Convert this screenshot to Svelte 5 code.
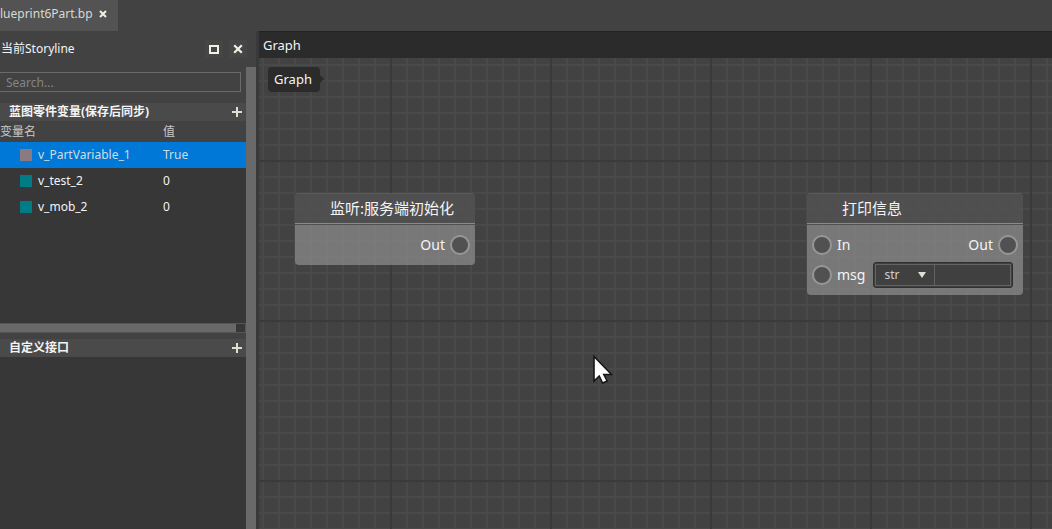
<script>
  const variables = [
    { name: 'v_PartVariable_1', value: 'True', tone: 'mauve', selected: true },
    { name: 'v_test_2', value: '0', tone: 'teal', selected: false },
    { name: 'v_mob_2', value: '0', tone: 'teal', selected: false }
  ];
  let search = $state('');
  let message = $state('');
  let kind = $state('str');
</script>

{#snippet plus()}
  <svg width="10" height="10" viewBox="0 0 10 10" shape-rendering="crispEdges" aria-hidden="true"><path d="M4 0h2v4h4v2H6v4H4V6H0V4h4z" fill="#deded2" /></svg>
{/snippet}

{#snippet cross()}
  <svg width="10" height="10" viewBox="0 0 10 10" aria-hidden="true"><path d="M1.2 1.2l7.6 7.6M8.8 1.2L1.2 8.8" stroke="#f0f0e4" stroke-width="2.2" /></svg>
{/snippet}

<div class="app">
  <header class="tabs">
    <div class="tab">
      <span>lueprint6Part.bp</span>
      <button class="tab-close" aria-label="Close tab"><svg width="8" height="8" viewBox="0 0 8 8" aria-hidden="true"><path d="M1 1l6 6M7 1L1 7" stroke="#f0f0e4" stroke-width="2" /></svg></button>
    </div>
  </header>

  <div class="work">
    <aside>
      <div class="panel-title">
        <span class="grow">当前Storyline</span>
        <button class="tool" aria-label="Float panel"><svg width="10" height="9" viewBox="0 0 10 9" shape-rendering="crispEdges" aria-hidden="true"><path d="M0 0h10v9H0zM2 2v5h6V2z" fill="#f0f0e4" fill-rule="evenodd" /></svg></button>
        <button class="tool" aria-label="Close panel">{@render cross()}</button>
      </div>
      <div class="panel-body">
        <div class="panel-content">
          <div class="search"><input type="text" placeholder="Search..." aria-label="Search" bind:value={search} /></div>
          <section class="variables">
            <h2><span class="grow">蓝图零件变量(保存后同步)</span><button aria-label="Add variable">{@render plus()}</button></h2>
            <div class="list">
              <table>
                <thead><tr><th>变量名</th><th class="value">值</th></tr></thead>
                <tbody>
                  {#each variables as v}
                    <tr class:selected={v.selected}>
                      <td><div class="name"><i class={v.tone}></i>{v.name}</div></td>
                      <td>{v.value}</td>
                    </tr>
                  {/each}
                </tbody>
              </table>
            </div>
            <div class="hscroll"><div class="thumb"></div></div>
          </section>
          <section class="interfaces">
            <h2><span class="grow">自定义接口</span><button aria-label="Add interface">{@render plus()}</button></h2>
            <div class="list"></div>
          </section>
        </div>
        <div class="vscroll"></div>
      </div>
    </aside>

    <main>
      <div class="graph-title">Graph</div>
      <div class="canvas">
        <button class="crumb">Graph</button>

        <article class="node event">
          <h3>监听:服务端初始化</h3>
          <div class="ports">
            <div class="row"><span class="grow"></span><span>Out</span><i class="pin"></i></div>
          </div>
        </article>

        <article class="node print">
          <h3>打印信息</h3>
          <div class="ports">
            <div class="row"><i class="pin"></i><span class="grow">In</span><span>Out</span><i class="pin"></i></div>
            <div class="row">
              <i class="pin"></i><label for="msg">msg</label>
              <div class="field">
                <div class="pick">
                  <select aria-label="Type" bind:value={kind}><option>str</option></select>
                  <svg width="8" height="6" viewBox="0 0 8 6" aria-hidden="true"><path d="M0 0h8L4 6z" fill="#deded2" /></svg>
                </div>
                <input id="msg" type="text" bind:value={message} />
              </div>
            </div>
          </div>
        </article>

        <svg class="cursor" width="20" height="29" viewBox="0 0 20 29" aria-hidden="true"><path d="M1 1.5V26l5.2-5 3.4 7 4.6-2-3.4-6.5H18.5z" fill="#fff" stroke="#171717" stroke-width="1.6" /></svg>
      </div>
    </main>
  </div>
</div>

<style>
  :global(body) { margin: 0; background: #424242; }
  .app {
    min-height: 100vh;
    display: flex;
    flex-direction: column;
    overflow: hidden;
    background: #424242;
    color: #f4f4f4;
    font: 12px/18px "Noto Sans", "Noto Sans CJK SC", sans-serif;
  }
  * { box-sizing: border-box; }
  button, input, select {
    margin: 0;
    padding: 0;
    border: 0;
    background: none;
    color: inherit;
    font: inherit;
    outline: none;
    border-radius: 0;
  }
  button { display: grid; place-items: center; }
  svg { display: block; }
  .grow { flex: 1; }

  .tabs { height: 31px; display: flex; }
  .tab {
    display: flex;
    align-items: center;
    gap: 6px;
    padding: 0 11px 4px 0;
    background: #535353;
    color: #d8d8d8;
    white-space: nowrap;
  }
  .work { flex: 1; display: flex; }

  aside {
    width: 259px;
    flex: none;
    display: flex;
    flex-direction: column;
    border-right: 3px solid #393939;
  }
  .panel-title {
    height: 36px;
    display: flex;
    align-items: center;
    gap: 6px;
    padding: 0 9px 0 1px;
  }
  .tool { width: 18px; height: 18px; background: #464646; }
  .panel-body { flex: 1; display: flex; }
  .panel-content { flex: 1; min-width: 0; display: flex; flex-direction: column; }
  .vscroll { width: 10px; background: #696969; }
  .search { padding: 5px 5px 11px 0; }
  .search input {
    display: block;
    width: 100%;
    height: 20px;
    padding-left: 6px;
    border: 1px solid #6b6b6b;
    border-left: 0;
  }
  .search input::placeholder { color: #858585; opacity: 1; }
  h2 {
    display: flex;
    align-items: center;
    height: 18px;
    margin: 0;
    padding: 0 4px 0 9px;
    background: #4a4a4a;
    font-size: 12px;
    line-height: 20px;
    font-weight: 700;
  }
  .variables { display: flex; flex-direction: column; margin-bottom: 6px; }
  .list { background: #373737; }
  .variables .list { height: 202px; }
  .interfaces { flex: 1; display: flex; flex-direction: column; }
  .interfaces .list { flex: 1; }
  table { width: 100%; border-collapse: collapse; table-layout: fixed; }
  th {
    height: 21px;
    padding: 0;
    background: #424242;
    color: #c8c8c8;
    font-weight: 400;
    text-align: left;
  }
  th.value { width: 83px; }
  td { height: 26px; padding: 0; }
  .selected { background: #0078d7; color: #d0dce0; }
  .name { display: flex; align-items: center; gap: 6px; padding-left: 20px; }
  .name i { width: 12px; height: 12px; }
  .mauve { background: #8b7b80; }
  .teal { background: #007c89; }
  .hscroll {
    height: 10px;
    padding-right: 9px;
    border: 1px solid #555;
    border-left: 0;
    background: #373737;
  }
  .thumb { height: 100%; background: #696969; }

  main { flex: 1; min-width: 0; display: flex; flex-direction: column; font-size: 13px; }
  .graph-title {
    height: 27px;
    padding: 4px;
    border-top: 1px solid #222;
    background: #2b2b2b;
  }
  .canvas {
    flex: 1;
    position: relative;
    overflow: hidden;
    background-color: #424242;
    background-image:
      linear-gradient(90deg, #3a3a3a 2px, transparent 2px),
      linear-gradient(#3a3a3a 2px, transparent 2px),
      linear-gradient(90deg, #494949 2px, transparent 2px),
      linear-gradient(#494949 2px, transparent 2px);
    background-size: 160px 160px, 160px 160px, 16px 16px, 16px 16px;
    background-position: 131px 0, 0 102px, 3px 0, 0 6px;
  }
  .crumb {
    position: absolute;
    left: 9px;
    top: 9px;
    width: 52px;
    height: 25px;
    padding: 0 2px 1px 0;
    border-radius: 4px;
    background: #2b2b2b;
  }
  .crumb::after {
    content: "";
    position: absolute;
    left: 52px;
    top: 8px;
    border: 4px solid transparent;
    border-left-color: #2b2b2b;
    border-right: 0;
  }
  .node {
    position: absolute;
    top: 135px;
    border-radius: 4px;
    overflow: hidden;
    font-size: 14px;
  }
  .event { left: 36px; width: 180px; }
  .print { left: 548px; width: 216px; }
  h3 {
    height: 31px;
    margin: 0;
    padding: 4px 0 0 35px;
    border-top: 1px solid #5a5a5a;
    border-bottom: 1px solid #8a8a8a;
    background: rgba(81, 81, 81, 0.9);
    font-size: 15px;
    line-height: 20px;
    font-weight: 400;
  }
  .ports {
    padding: 5px;
    border-top: 1px solid #505050;
    background: rgba(136, 136, 136, 0.78);
  }
  .row { height: 30px; display: flex; align-items: center; gap: 5px; }
  .pin {
    width: 20px;
    height: 20px;
    border: 2px solid #979797;
    border-radius: 50%;
    background: #515151;
  }
  .field {
    flex: 1;
    min-width: 0;
    height: 26px;
    display: flex;
    margin: 0 5px 0 3px;
    padding: 1px;
    border: 1px solid #303030;
    border-radius: 3px;
    background: #404040;
    font-size: 12px;
  }
  .pick {
    flex: none;
    width: 60px;
    display: flex;
    align-items: center;
    padding: 0 8px;
    border: 1px solid #636363;
  }
  .pick select { appearance: none; flex: 1; min-width: 0; color: #d0d0d0; }
  .field input { flex: 1; width: 0; min-width: 0; border: 1px solid #636363; border-left: 0; }
  .cursor { position: absolute; left: 334px; top: 297px; }
</style>
